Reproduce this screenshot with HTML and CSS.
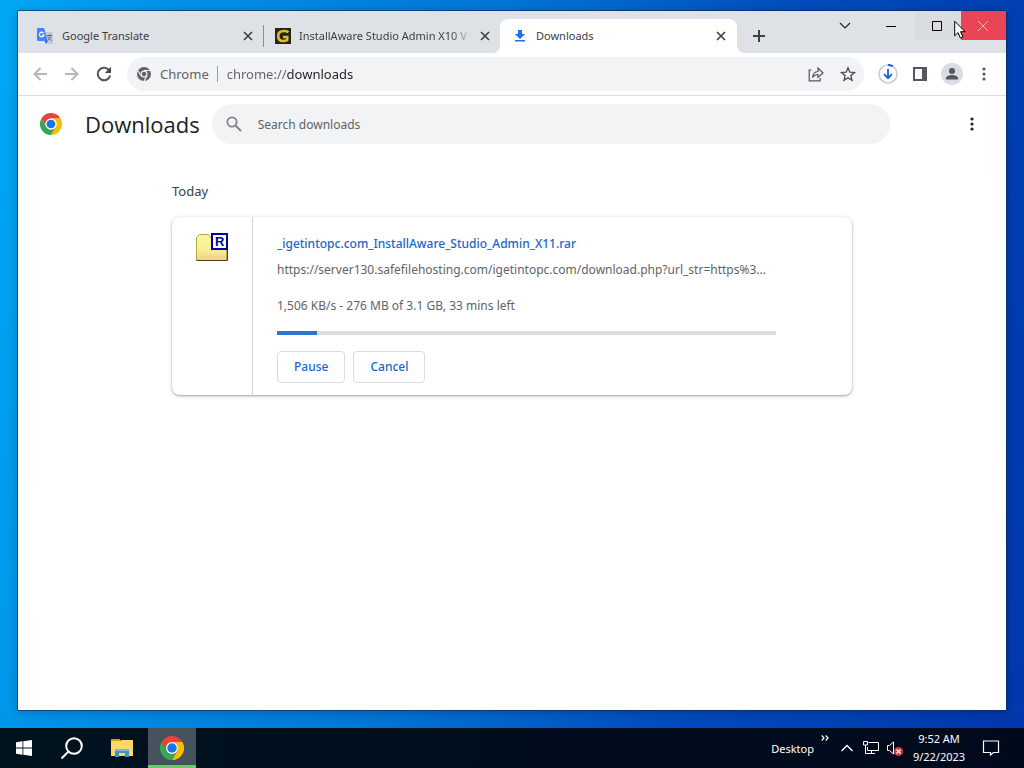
FILE: index.html
```html
<!DOCTYPE html>
<html lang="en">
<head>
    <meta charset="UTF-8">
    <meta name="viewport" content="width=device-width, initial-scale=1.0">
    <title>Downloads</title>
    <link rel="stylesheet" href="styles.css">
</head>
<body>
    <!-- shared Chrome logo -->
    <svg class="defs" aria-hidden="true">
        <symbol id="chrome-logo" viewBox="0 0 48 48">
            <path fill="#ea4335" d="M3.2 12A24 24 0 0 1 44.8 12H24A12 12 0 0 0 13.6 30z"/>
            <path fill="#fbbc04" d="M44.8 12A24 24 0 0 1 24 48L34.4 30A12 12 0 0 0 24 12z"/>
            <path fill="#34a853" d="M24 48A24 24 0 0 1 3.2 12L13.6 30A12 12 0 0 0 34.4 30z"/>
            <circle cx="24" cy="24" r="12" fill="#fff"/>
            <circle cx="24" cy="24" r="9.5" fill="#1a73e8"/>
        </symbol>
        <symbol id="cross" viewBox="0 0 10 10">
            <path d="M1 1l8 8M9 1l-8 8" fill="none" stroke="currentColor" stroke-width="1.6"/>
        </symbol>
        <symbol id="dots" viewBox="0 0 4 16">
            <circle cx="2" cy="3" r="1.6"/>
            <circle cx="2" cy="8" r="1.6"/>
            <circle cx="2" cy="13" r="1.6"/>
        </symbol>
    </svg>

    <div class="desktop">
        <div class="window">
            <div class="tab-strip">
                <div class="tab">
                    <svg width="16" height="16" viewBox="0 0 16 16">
                        <path fill="#c5cad3" d="M8 4h7a1 1 0 0 1 1 1v10a1 1 0 0 1-1 1H9z"/>
                        <path fill="#4285f4" d="M1.2 0H7l3.800 13H1.200A1.200 1.200 0 0 1 0 12V1.200A1.200 1.200 0 0 1 1.200 0z"/>
                        <path fill="#3367d6" d="M7.500 13h3.300L9 16z"/>
                        <path fill="none" stroke="#fff" stroke-width="1.200" d="M6.500 5A2.300 2.300 0 1 0 7 7H4.800"/>
                        <path fill="none" stroke="#5f6b82" d="M10 7.500h5M12.500 6v1.500M14 8q-.8 3-3.500 4.500M11 8.500q1 2.500 3.500 4"/>
                    </svg>
                    <span class="tab-title">Google Translate</span>
                    <button class="tab-close" aria-label="Close tab"><svg width="10" height="10"><use href="#cross"/></svg></button>
                </div>
                <div class="tab second">
                    <svg width="16" height="16" viewBox="0 0 16 16">
                        <path fill="#28241c" d="M0 0h16v16H0z"/>
                        <path fill="none" stroke="#d6bd35" stroke-width="2.600" d="M13.500 4.200Q12 3 9 3C5 3 3.200 5 3.200 8s1.800 5 4.800 5q3 0 4.200-1V9H8"/>
                    </svg>
                    <span class="tab-title fade">InstallAware Studio Admin X10 V</span>
                    <button class="tab-close" aria-label="Close tab"><svg width="10" height="10"><use href="#cross"/></svg></button>
                </div>
                <div class="tab active">
                    <svg width="14" height="16" viewBox="0 0 14 16" fill="#1a73e8">
                        <path d="M5 2h4v4h3l-5 5-5-5h3zM2 12h10v1.600H2z"/>
                    </svg>
                    <span class="tab-title">Downloads</span>
                    <button class="tab-close" aria-label="Close tab"><svg width="10" height="10"><use href="#cross"/></svg></button>
                </div>
                <button class="new-tab" aria-label="New tab">
                    <svg width="12" height="12" viewBox="0 0 12 12"><path d="M6 0v12M0 6h12" stroke="#3c4043" stroke-width="2"/></svg>
                </button>
                <div class="window-controls">
                    <button aria-label="Search tabs"><svg width="12" height="8" viewBox="0 0 12 8"><path d="M1 1l5 5 5-5" fill="none" stroke="#202124" stroke-width="1.200"/></svg></button>
                    <button aria-label="Minimize"><svg width="10" height="10" viewBox="0 0 10 10"><path d="M0 5.500h10" stroke="#000"/></svg></button>
                    <button class="maximize" aria-label="Maximize"><svg width="10" height="10" viewBox="0 0 10 10"><path d="M.5.5h9v9h-9z" fill="none" stroke="#000"/></svg></button>
                    <button class="close" aria-label="Close"><svg width="10" height="10" viewBox="0 0 10 10"><path d="M0 0l10 10M10 0L0 10" stroke="#f6b6b5"/></svg></button>
                    <svg class="pointer" width="13" height="20" viewBox="0 0 13 20">
                        <path d="M.7 1.200v14.600l3.400-3.200 2.300 5.500 2.500-1L6.600 11.700h4.500z" fill="#fff" stroke="#000"/>
                    </svg>
                </div>
            </div>

            <div class="toolbar">
                <button class="tool light" aria-label="Back">
                    <svg width="14" height="14" viewBox="0 0 14 14"><path d="M14 7H1.500M7.500 1l-6 6 6 6"/></svg>
                </button>
                <button class="tool light" aria-label="Forward">
                    <svg width="14" height="14" viewBox="0 0 14 14"><path d="M0 7h12.500M6.500 1l6 6-6 6"/></svg>
                </button>
                <button class="tool" aria-label="Reload">
                    <svg width="16" height="16" viewBox="0 0 16 16"><path d="M13.300 4.400A6.300 6.300 0 1 0 14.200 9.500" stroke-width="2"/><path d="M15 .8V7H8.800z" fill="#45494d" stroke="none"/></svg>
                </button>
                <div class="omnibox">
                    <svg width="14" height="14" viewBox="0 0 48 48">
                        <circle cx="24" cy="24" r="24" fill="#5f6368"/>
                        <path d="M24 12h22M13.600 30L3 12M34.400 30L24 48" stroke="#f1f3f4" stroke-width="4"/>
                        <circle cx="24" cy="24" r="12" fill="#f1f3f4"/>
                        <circle cx="24" cy="24" r="8" fill="#5f6368"/>
                    </svg>
                    <label class="site" for="address">Chrome</label>
                    <input class="address" id="address" type="text" value="chrome://downloads">
                    <button class="tool" aria-label="Share">
                        <svg width="16" height="16" viewBox="0 0 16 16"><path class="thin" d="M3.500 4H1.200v10.800h11V12M4.500 11.500Q5 6 10 5.500V2l5 5-5 4.500V8.500Q6.500 8.500 4.500 11.500z"/></svg>
                    </button>
                    <button class="tool" aria-label="Bookmark">
                        <svg width="16" height="16" viewBox="0 0 16 16"><path d="M8 1.800l1.800 4.300 4.700.4-3.600 3.100 1.100 4.600L8 11.800l-4 2.400 1.100-4.600L1.500 6.500l4.700-.4z" stroke-width="1.400"/></svg>
                    </button>
                </div>
                <div class="tools">
                    <button class="tool" aria-label="Downloads in progress">
                        <svg width="20" height="20" viewBox="0 0 20 20">
                            <circle cx="10" cy="10" r="9" stroke="#c9ccd1" stroke-width="1.600"/>
                            <path d="M10 1a9 9 0 0 1 4.600 1.300" stroke="#1a5fd8"/>
                            <path d="M10 5v9M6 10.200l4 4 4-4" stroke="#1a5fd8" stroke-width="1.800"/>
                        </svg>
                    </button>
                    <button class="tool" aria-label="Side panel">
                        <svg width="14" height="14" viewBox="0 0 14 14"><path d="M1 1h12v12H1z" stroke-width="2"/><path d="M9 0h5v14H9z" fill="#54585c" stroke="none"/></svg>
                    </button>
                    <button class="tool" aria-label="Profile">
                        <svg width="22" height="22" viewBox="0 0 22 22"><circle cx="11" cy="11" r="11" fill="#dadce3" stroke="none"/><circle cx="11" cy="8" r="3" fill="#54585f" stroke="none"/><path d="M5 16.500v-1.500c0-2 4-3 6-3s6 1 6 3v1.500z" fill="#54585f" stroke="none"/></svg>
                    </button>
                    <button class="tool filled" aria-label="Menu"><svg width="4" height="16"><use href="#dots"/></svg></button>
                </div>
            </div>

            <header class="page-header">
                <svg width="22" height="22"><use href="#chrome-logo"/></svg>
                <h1>Downloads</h1>
                <div class="search">
                    <svg width="16" height="16" viewBox="0 0 16 16"><circle cx="6" cy="6" r="4.600" fill="none" stroke="#80868b" stroke-width="1.800"/><path d="M9.500 9.500l5.500 5.500" stroke="#80868b" stroke-width="2"/></svg>
                    <input type="search" aria-label="Search downloads" placeholder="Search downloads">
                </div>
                <button class="more" aria-label="More actions"><svg width="4" height="16"><use href="#dots"/></svg></button>
            </header>

            <main class="downloads">
                <h2>Today</h2>
                <div class="card">
                    <div class="file-icon">
                        <svg width="34" height="30" viewBox="0 0 34 30">
                            <defs>
                                <linearGradient id="folder" x1="0" y1="0" x2="0" y2="1">
                                    <stop offset="0" stop-color="#fcf6a0"/>
                                    <stop offset=".6" stop-color="#f9ef94"/>
                                    <stop offset="1" stop-color="#f2c98a"/>
                                </linearGradient>
                            </defs>
                            <path d="M1.500 5.500l3-3h9l2 3h16v23h-30z" fill="url(#folder)" stroke="#b8a83c"/>
                            <path d="M1.500 28.500h31V17" fill="none" stroke="#4c4210"/>
                            <path d="M17 2h15v15H17z" fill="#fff" stroke="#0000a8" stroke-width="2"/>
                            <text class="rar-letter" x="20" y="14">R</text>
                        </svg>
                    </div>
                    <div class="details">
                        <a class="file-name" href="#">_igetintopc.com_InstallAware_Studio_Admin_X11.rar</a>
                        <div class="url">https://server130.safefilehosting.com/igetintopc.com/download.php?url_str=https%3...</div>
                        <label class="status" for="progress">1,506 KB/s - 276 MB of 3.1 GB, 33 mins left</label>
                        <progress id="progress" value="8" max="100"></progress>
                        <div class="actions">
                            <button>Pause</button>
                            <button>Cancel</button>
                        </div>
                    </div>
                </div>
            </main>
        </div>
    </div>

    <div class="taskbar">
        <button class="task" aria-label="Start">
            <svg width="16" height="16" viewBox="0 0 16 16" fill="#fff"><path d="M0 2.200l6.500-.9v6.200H0zM7.300 1.200L16 0v7.500H7.300zM0 8.500h6.500v6.200L0 13.800zM7.300 8.500H16V16l-8.700-1.200z"/></svg>
        </button>
        <button class="task" aria-label="Search">
            <svg width="24" height="24" viewBox="0 0 24 24" fill="none" stroke="#fff" stroke-width="2"><circle cx="14" cy="10" r="7.800"/><path d="M8.500 15.500L1.500 22.500"/></svg>
        </button>
        <button class="task explorer" aria-label="File Explorer">
            <svg width="22" height="18" viewBox="0 0 22 18"><path fill="#d99b1c" d="M0 0h9v3H0z"/><path fill="#fbd768" d="M0 2h9l1-1h12v16H0z"/><path fill="#3f93cf" d="M4 10h14v8h-4v-4H8v4H4z"/><path fill="#71b7e4" d="M4 10h14v2H4z"/></svg>
        </button>
        <button class="task running" aria-label="Google Chrome">
            <svg width="24" height="24"><use href="#chrome-logo"/></svg>
        </button>
        <div class="tray">
            <button class="desktop-bar">Desktop</button>
            <button class="chevrons" aria-label="Show desktop items">
                <svg width="8" height="6" viewBox="0 0 8 6"><path d="M.7.500L3 3 .7 5.500M4.700.500L7 3 4.700 5.500" fill="none" stroke="#fff" stroke-width="1.200"/></svg>
            </button>
            <button aria-label="Show hidden icons">
                <svg width="12" height="8" viewBox="0 0 12 8"><path d="M.5 7L6 1.500 11.500 7" fill="none" stroke="#fff" stroke-width="1.400"/></svg>
            </button>
            <button aria-label="Network">
                <svg width="16" height="14" viewBox="0 0 16 14" fill="none" stroke="#fff"><path d="M5.500 1.500h10v8h-11V6M5 12.500h7M8.500 10v2.500M.5.500h4v3.500h-4zM2.500 4v8.500H5"/></svg>
            </button>
            <button aria-label="Volume muted">
                <svg width="16" height="16" viewBox="0 0 16 16"><path d="M.5 5.500h2L6.500 2v12l-4-3.500h-2z" fill="none" stroke="#fff"/><circle cx="11.500" cy="11.500" r="4.500" fill="#d63a3a"/><path d="M9.500 9.500l4 4M13.500 9.500l-4 4" stroke="#fff" stroke-width="1.200"/></svg>
            </button>
            <button class="clock">
                <span>9:52 AM</span>
                <span>9/22/2023</span>
            </button>
            <button class="notifications" aria-label="Notifications">
                <svg width="18" height="16" viewBox="0 0 18 16"><path d="M1.500 1h15v11.500h-5L8.500 15v-2.500h-7z" fill="none" stroke="#fff" stroke-width="1.200"/></svg>
            </button>
        </div>
    </div>
</body>
</html>
```
FILE: styles.css
```css
* {
    box-sizing: border-box;
}

body {
    margin: 0;
    height: 100vh;
    display: flex;
    flex-direction: column;
    font-family: "Noto Sans", "Open Sans", sans-serif;
    font-size: 12px;
    color: #3c4043;
}

button,
input {
    font: inherit;
    border: none;
    background: none;
    padding: 0;
    outline: none;
}

button {
    display: flex;
    align-items: center;
    justify-content: center;
}

svg {
    flex: none;
}

.defs {
    display: none;
}

/* Desktop and window */
.desktop {
    flex: 1;
    display: flex;
    padding: 11px 18px 18px;
    background: linear-gradient(100deg, #00a8f4 0%, #0092e8 15%, #0074d2 45%, #004bbd 70%, #0038ad 100%);
}

.window {
    flex: 1;
    min-width: 0;
    display: flex;
    flex-direction: column;
    background: #fff;
    box-shadow: 0 0 0 1px rgba(0, 40, 90, 0.6), 0 2px 10px rgba(0, 0, 0, 0.25);
}

/* Tabs */
.tab-strip {
    display: flex;
    align-items: flex-end;
    height: 42px;
    padding-left: 8px;
    background: #dee1e6;
}

.tab {
    flex: 0 1 237px;
    min-width: 0;
    height: 34px;
    padding: 0 10px 0 11px;
    display: flex;
    align-items: center;
    gap: 9px;
    font-size: 11px;
}

.tab.second {
    padding-left: 11px;
    gap: 8px;
    border-left: 1px solid transparent;
    border-image: linear-gradient(transparent 20%, #8b8f94 20%, #8b8f94 80%, transparent 80%) 1;
}

.tab.active {
    padding-left: 13px;
    padding-right: 11px;
    position: relative;
    background: #fff;
    border-radius: 8px 8px 0 0;
}

/* flared bottom corners of the active tab */
.tab.active::before,
.tab.active::after {
    content: "";
    position: absolute;
    bottom: 0;
    width: 8px;
    height: 8px;
}

.tab.active::before {
    left: -8px;
    background: radial-gradient(circle at 0 0, transparent 8px, #fff 8px);
}

.tab.active::after {
    right: -8px;
    background: radial-gradient(circle at 100% 0, transparent 8px, #fff 8px);
}

.tab-title {
    flex: 1;
    padding-bottom: 2px;
    overflow: hidden;
    white-space: nowrap;
}

.fade {
    -webkit-mask-image: linear-gradient(to right, #000 88%, transparent);
    mask-image: linear-gradient(to right, #000 88%, transparent);
}

.tab-close {
    width: 10px;
    height: 16px;
    color: #3c4043;
}

.new-tab {
    width: 28px;
    height: 34px;
    margin-left: 8px;
}

.window-controls {
    position: relative;
    align-self: flex-start;
    display: flex;
    margin-left: auto;
}

.window-controls button {
    width: 46px;
    height: 29px;
    padding-right: 2px;
}

.window-controls .maximize {
    background: #d9dce1;
}

.window-controls .close {
    width: 45px;
    background: #e84556;
}

.pointer {
    position: absolute;
    right: 39px;
    top: 9px;
}

/* Toolbar */
.toolbar {
    display: flex;
    align-items: center;
    height: 43px;
    padding: 0 6px;
    border-bottom: 1px solid #dadce0;
}

.tool {
    width: 32px;
    height: 32px;
}

.tool svg {
    fill: none;
    stroke: #54585c;
    stroke-width: 2;
}

.tool .thin {
    stroke-width: 1.2;
}

.tool.light svg {
    stroke: #b5b7ba;
}

.tool.filled svg {
    fill: #54585c;
    stroke: none;
}

.omnibox {
    flex: 1;
    min-width: 0;
    display: flex;
    align-items: center;
    height: 34px;
    margin-left: 7px;
    padding-left: 10px;
    border-radius: 17px;
    background: #f1f3f4;
    font-size: 13px;
}

.site {
    margin-left: 9px;
    padding-right: 8px;
    border-right: 1px solid #9aa0a6;
    line-height: 16px;
    color: #5f6368;
}

/* scheme is dimmer than the host */
.address {
    flex: 1;
    min-width: 0;
    padding-left: 9px;
    color: transparent;
    background: linear-gradient(to right, #5f6368 69px, #202124 69px);
    -webkit-background-clip: text;
    background-clip: text;
}

.tools {
    display: flex;
    margin-left: 8px;
}

/* Downloads page */
.page-header {
    display: flex;
    align-items: center;
    height: 56px;
    padding: 0 20px 0 22px;
}

h1 {
    flex: none;
    margin: 0;
    padding: 0 12px 0 23px;
    font-family: "Open Sans", sans-serif;
    font-size: 22px;
    line-height: 30px;
    font-weight: 500;
    color: #202124;
}

.search {
    flex: 1;
    display: flex;
    align-items: center;
    height: 40px;
    margin-right: 68px;
    padding-left: 14px;
    border-radius: 20px;
    background: #f1f3f4;
}

.search input {
    flex: 1;
    margin-left: 16px;
}

.search input::placeholder {
    color: #5f6368;
}

.more {
    width: 28px;
    height: 28px;
    fill: #202124;
}

.downloads {
    width: 100%;
    max-width: 680px;
    margin: 0 auto;
    padding-top: 29px;
}

h2 {
    margin: 0 0 16px;
    font-size: 13px;
    line-height: 20px;
    font-weight: 400;
}

.card {
    display: flex;
    border-radius: 8px;
    box-shadow: 0 1px 2px rgba(60, 64, 67, 0.35), 0 1px 4px rgba(60, 64, 67, 0.2);
}

.file-icon {
    width: 81px;
    padding: 15px 0 0 23px;
    border-right: 1px solid #d3d3d3;
}

.rar-letter {
    font: bold 13px "Liberation Sans", sans-serif;
    fill: #0000a8;
}

.details {
    flex: 1;
    min-width: 0;
    display: flex;
    flex-direction: column;
    padding: 17px 76px 12px 24px;
    line-height: 20px;
    color: #5f6368;
}

.file-name {
    align-self: flex-start;
    font-weight: 500;
    color: #1967c8;
    text-decoration: none;
}

.url {
    margin-top: 6px;
    overflow: hidden;
    white-space: nowrap;
}

.status {
    margin-top: 16px;
}

progress {
    width: 100%;
    height: 4px;
    margin: 15px 0 16px;
    border: none;
    background: #dcdcdc;
    -webkit-appearance: none;
    appearance: none;
}

progress::-webkit-progress-bar {
    background: #dcdcdc;
}

progress::-webkit-progress-value {
    background: #2f74cf;
}

.actions {
    display: flex;
    gap: 8px;
}

.actions button {
    height: 32px;
    padding: 0 16px;
    border: 1px solid #dadce0;
    border-radius: 4px;
    font-weight: 500;
    color: #1967d2;
}

/* Taskbar */
.taskbar {
    display: flex;
    height: 40px;
    background: linear-gradient(to right, #00131f, #000d1d 50%, #000a1c);
    color: #fff;
    font-size: 11px;
}

.task {
    width: 48px;
}

.task.explorer {
    width: 52px;
}

.task.running {
    background: #46525c;
    border-bottom: 3px solid #5fd35a;
    padding-top: 2px;
}

.tray {
    display: flex;
    margin-left: auto;
    padding-right: 13px;
}

.tray button {
    width: 24px;
    color: #fff;
}

.tray .desktop-bar {
    width: auto;
}

.tray .chevrons {
    width: 21px;
    align-items: flex-start;
    padding-top: 7px;
}

.tray .clock {
    width: 64px;
    flex-direction: column;
    line-height: 18px;
}

.tray .notifications {
    width: 40px;
}
```
